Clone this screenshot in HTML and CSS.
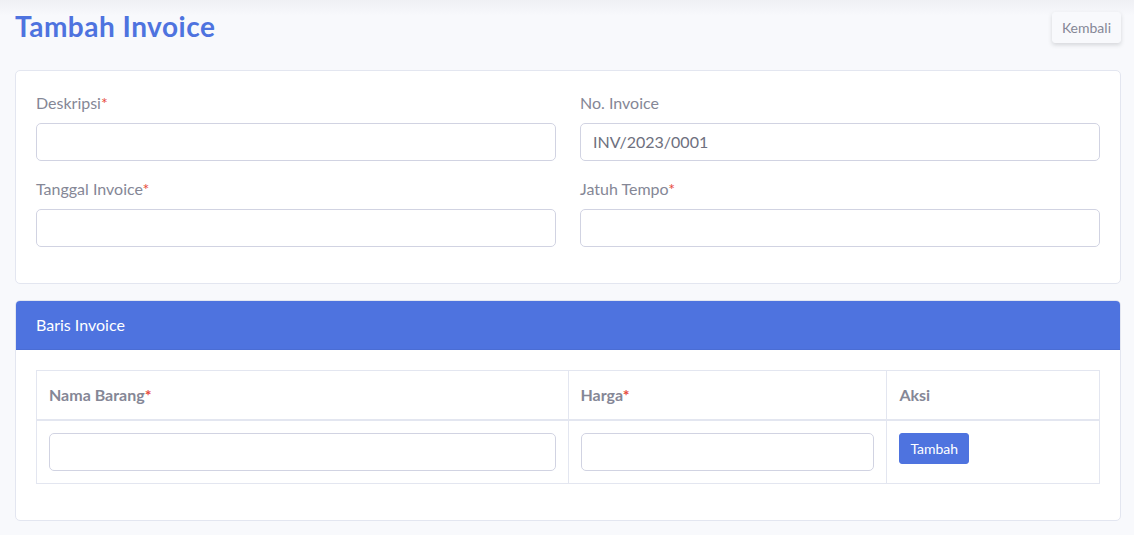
FILE: index.html
```html
<!DOCTYPE html>
<html lang="id">
<head>
<meta charset="utf-8">
<title>Tambah Invoice</title>
<link rel="stylesheet" href="styles.css">
</head>
<body>
<div class="container">
  <div class="page-head">
    <h1 class="page-title">Tambah Invoice</h1>
    <button class="btn btn-light">Kembali</button>
  </div>

  <div class="card">
    <div class="card-body">
      <div class="form-grid">
        <div class="form-group">
          <label class="label">Deskripsi<span class="req">*</span></label>
          <input class="input" type="text">
        </div>
        <div class="form-group">
          <label class="label">No. Invoice</label>
          <input class="input" type="text" value="INV/2023/0001">
        </div>
        <div class="form-group">
          <label class="label">Tanggal Invoice<span class="req">*</span></label>
          <input class="input" type="text">
        </div>
        <div class="form-group">
          <label class="label">Jatuh Tempo<span class="req">*</span></label>
          <input class="input" type="text">
        </div>
      </div>
    </div>
  </div>

  <div class="card">
    <div class="card-header">Baris Invoice</div>
    <div class="card-body">
      <table class="table">
        <thead>
          <tr>
            <th class="col-name">Nama Barang<span class="req">*</span></th>
            <th class="col-price">Harga<span class="req">*</span></th>
            <th class="col-act">Aksi</th>
          </tr>
        </thead>
        <tbody>
          <tr>
            <td><input class="input" type="text"></td>
            <td><input class="input" type="text"></td>
            <td><button class="btn btn-primary">Tambah</button></td>
          </tr>
        </tbody>
      </table>
    </div>
  </div>
</div>
</body>
</html>
```
FILE: styles.css
```css
* { box-sizing: border-box; }

html, body {
  margin: 0;
  padding: 0;
}

body {
  background: #f8f9fc linear-gradient(to bottom, #eff0f4 0px, #f8f9fc 16px) no-repeat;
  font-family: "Lato", "Noto Sans", sans-serif;
  font-size: 16px;
  line-height: 1.5;
  color: #858796;
}

.container {
  padding: 10px 13px 0 15px;
}

.page-head {
  display: flex;
  align-items: center;
  justify-content: space-between;
  margin-bottom: 26px;
}

.page-title {
  margin: 0;
  font-size: 28px;
  font-weight: 700;
  line-height: 1.2;
  letter-spacing: 0.5px;
  color: #4e73df;
}

.btn {
  font-family: inherit;
  font-size: 14px;
  line-height: 1.5;
  padding: 4px 8px;
  border-radius: 3px;
  border: 1px solid transparent;
  cursor: pointer;
}

.btn-light {
  background: #f8f9fc;
  border-color: #f8f9fc;
  color: #858796;
  box-shadow: 0 2px 4px rgba(58, 59, 69, 0.18);
  margin-top: 2px;
  padding: 4px 9px;
}

.btn-primary {
  background: #4e73df;
  border-color: #4e73df;
  color: #fff;
  padding: 4px 10px;
}

.card {
  background: #fff;
  border: 1px solid #e3e6f0;
  border-radius: 5px;
  margin-bottom: 16px;
  overflow: hidden;
}

.card-header {
  background: #4e73df;
  color: #fff;
  padding: 12px 20px;
  font-size: 16px;
  line-height: 24px;
  border-bottom: 1px solid #4a6dd4;
}

.card-body {
  padding: 20px;
}

.form-grid {
  display: grid;
  grid-template-columns: 1fr 1fr;
  column-gap: 24px;
}

.form-group {
  margin-bottom: 16px;
}

.label {
  display: block;
  margin-bottom: 8px;
  line-height: 24px;
}

.req {
  color: #e74a3b;
}

.input {
  display: block;
  width: 100%;
  height: 38px;
  padding: 6px 12px;
  font-family: inherit;
  font-size: 16px;
  line-height: 1.5;
  color: #6e707e;
  background: #fff;
  border: 1px solid #d1d3e2;
  border-radius: 5px;
  outline: none;
}

.table {
  width: 100%;
  border-collapse: collapse;
  margin-bottom: 16px;
  color: #858796;
}

.table th,
.table td {
  border: 1px solid #e3e6f0;
  padding: 12px;
  text-align: left;
  vertical-align: top;
}

.table th {
  font-weight: 700;
  line-height: 24px;
  border-bottom-width: 2px;
}

.col-name { width: 50%; }
.col-price { width: 30%; }
.col-act { width: 20%; }
```
